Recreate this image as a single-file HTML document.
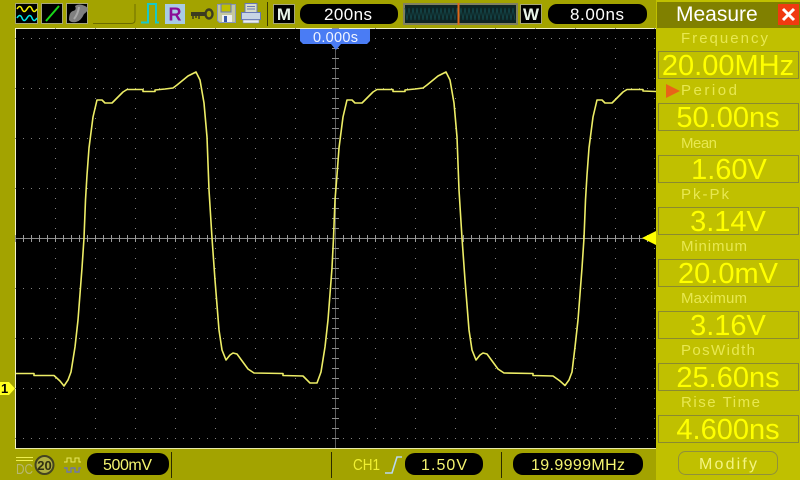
<!DOCTYPE html>
<html><head><meta charset="utf-8"><style>
html,body{margin:0;padding:0;background:#a3a300;overflow:hidden}
svg{display:block;font-family:"Liberation Sans",sans-serif}
</style></head><body>
<svg width="800" height="480" viewBox="0 0 800 480" xmlns="http://www.w3.org/2000/svg">
<rect width="800" height="480" fill="#a3a300"/>
<!-- screen -->
<rect x="15" y="28" width="641" height="421" fill="#000"/>
<path d="M15.5 449V28.5H656" fill="none" stroke="#f4f4c8"/>
<path d="M15 448.5H656" stroke="#e8e8a8"/>
<!-- grid -->
<g stroke="#808080" fill="none">
<g stroke-dasharray="1 7">
<path d="M15 38.5H655M15 88.5H655M15 138.5H655M15 188.5H655M15 288.5H655M15 338.5H655M15 388.5H655M15 438.5H655"/>
</g>
<g stroke-dasharray="1 9">
<path d="M55.5 28V448M95.5 28V448M135.5 28V448M175.5 28V448M215.5 28V448M255.5 28V448M295.5 28V448M375.5 28V448M415.5 28V448M455.5 28V448M495.5 28V448M535.5 28V448M575.5 28V448M615.5 28V448M654.5 28V448"/>
</g>
<path d="M16 238.500H656" stroke="#8c8c8c"/>
<path d="M15 238.500H656" stroke-dasharray="1 7" stroke-width="7" stroke="#9a9a9a"/>
<path d="M335.500 28V448" stroke="#5c5c5c"/>
<path d="M335.500 28V448" stroke-dasharray="1 9" stroke-width="7" stroke="#8c8c8c"/>
</g>
<!-- waveform -->
<polyline fill="none" stroke="#eded66" stroke-width="1.6" stroke-linejoin="round" points="16,373.5 34,373.5 34,375.5 54,375.5 60,381 64,386 68,380 71,372 75,347 78,320 82,268 84,238 85.5,200 87,175 89,148 93,117 97,100 102,100 105,103 112,103 123,92 127,89.5 143,89.5 143,91.5 155,91.5 155,90 165,89 173,88 177,85 188,76 196,72 200,80 204,103 207,137 209,190 212,238 215,280 219,330 222,350 226,360 230,355 233,353 237,354 248,369 254,373 283,373.5 283,375.500 303,376 310,383 317,383 321,372 325,347 328,320 332,268 333.5,238 335,200 337,175 339,148 343,117 347,100 352,100 355,103 362,103 373,92 377,89.5 393,89.5 393,91.5 405,91.5 405,90 415,89 423,88 427,85 438,76 446,72 450,80 454,103 457,137 459,190 462,238 465,280 469,330 472,350 476,360 480,355 483,353 487,354 498,369 504,373 533,373.5 533,375.5 553,376 560,381 565,385.5 569,380 572,372 575,347 578,320 582,268 584,238 585.5,200 587,175 589,148 593,117 597,100 602,100 605,103 612,103 623,92 627,89.5 643,89.5 643,91 656,91.5"/>
<!-- top-left icons -->
<rect x="15.5" y="3.5" width="22" height="20" fill="#000" stroke="#a8a878"/>
<path d="M17 9q3-5 5 0t5 0 5 0 5 0" fill="none" stroke="#f0f000" stroke-width="1.6"/>
<path d="M17 18q3-5 5 0t5 0 5 0 5 0" fill="none" stroke="#00e8e8" stroke-width="1.6"/>
<rect x="41.5" y="3.5" width="21" height="20" fill="#000" stroke="#a8a878"/>
<path d="M46 21L59 6" stroke="#18d818" stroke-width="2"/>
<rect x="66.5" y="3.5" width="21" height="20" fill="#000" stroke="#a8a878"/>
<path d="M69 20Q69 12 73 11T75 6Q79 3 85 6T84 14Q81 21 76 22T69 20Z" fill="#808080"/>
<path d="M74 19Q78 14 79 7" stroke="#a8a8a8" stroke-width="2" fill="none"/>
<path d="M93 23.5H131Q135 23.5 135 20V4" fill="none" stroke="#6c6c00"/>
<path d="M141 22.5H148V4H156V22.5H159" fill="none" stroke="#18c8c8" stroke-width="2"/>
<rect x="165" y="4" width="20" height="20" fill="#a8cbe4"/>
<text x="175" y="20.500" font-size="18" font-weight="bold" fill="#8a0a96" text-anchor="middle">R</text>
<!-- key -->
<path d="M191 14H205" stroke="#3c3c20" stroke-width="4"/>
<path d="M193 16v3M196 16v2M199 16v3" stroke="#3c3c20" stroke-width="1.5"/>
<ellipse cx="209" cy="14" rx="3.500" ry="4.500" fill="none" stroke="#3c3c20" stroke-width="2.400"/>
<!-- floppy -->
<path d="M217.500 4.500H235.500V22.500H219.500L217.500 20.500Z" fill="#c4c8a0" stroke="#8898c0"/>
<rect x="221" y="4" width="10" height="8" fill="#c0c000" stroke="#6878b8"/>
<rect x="222" y="15" width="10" height="7" fill="#eef0f0"/>
<rect x="224" y="16" width="3" height="6" fill="#3858a8"/>
<!-- printer -->
<rect x="245" y="3.500" width="12" height="9" fill="#d8dcc8" stroke="#6878b8"/>
<path d="M247 6.500H255M247 9H255" stroke="#6878b8"/>
<rect x="241.500" y="12.500" width="19" height="7" fill="#c8d4e4" stroke="#6878b8"/>
<rect x="243" y="20" width="16" height="3" fill="#e8ecf0" stroke="#8090b0" stroke-width=".6"/>
<path d="M267.500 2V26" stroke="#3c3c00"/>
<!-- M -->
<rect x="273.500" y="4.500" width="21" height="19" fill="#000" stroke="#a8a878"/>
<text x="284" y="20" font-size="17" font-weight="bold" fill="#e8f4e8" text-anchor="middle">M</text>
<rect x="300" y="4" width="98" height="20" rx="9" fill="#000"/>
<text x="324" y="20" font-size="17" fill="#fff" textLength="48" lengthAdjust="spacing">200ns</text>
<!-- wave overview -->
<rect x="404" y="4" width="113" height="20" fill="#0e2424" stroke="#808060" stroke-width="2"/>
<path d="M405 8L407 20L409 8L411 20L413 8L415 20L417 8L419 20L421 8L423 20L425 8L427 20L429 8L431 20L433 8L435 20L437 8L439 20L441 8L443 20L445 8L447 20L449 8L451 20L453 8L455 20L457 8L459 20L461 8L463 20L465 8L467 20L469 8L471 20L473 8L475 20L477 8L479 20L481 8L483 20L485 8L487 20L489 8L491 20L493 8L495 20L497 8L499 20L501 8L503 20L505 8L507 20L509 8L511 20L513 8L515 20" fill="none" stroke="#14484c" stroke-width=".8"/>
<rect x="457.500" y="3" width="2" height="22" fill="#e06818"/>
<!-- W -->
<rect x="520.500" y="4.500" width="21" height="19" fill="#000" stroke="#a8a878"/>
<text x="531" y="20" font-size="17" font-weight="bold" fill="#e8f4e8" text-anchor="middle">W</text>
<rect x="548" y="4" width="99" height="20" rx="9" fill="#000"/>
<text x="570" y="20" font-size="17" fill="#fff" textLength="54" lengthAdjust="spacing">8.00ns</text>
<!-- trigger time tag -->
<path d="M300 29H370V41L367 44H341L336 50L331 44H303L300 41Z" fill="#4a7cf4"/>
<text x="313" y="42" font-size="14.500" fill="#f0f4ff" textLength="45" lengthAdjust="spacing">0.000s</text>
<!-- markers -->
<path d="M656 231V245L642 238Z" fill="#ffff00"/>
<path d="M0 382H9L15 388.500L9 395H0Z" fill="#ffff20"/>
<text x="1" y="393" font-size="13" font-weight="bold" fill="#000">1</text>
<!-- right panel -->
<rect x="656" y="0" width="144" height="480" fill="#c0c000"/>
<rect x="657" y="2" width="143" height="26" fill="#808000"/>
<text x="676" y="21" font-size="21" fill="#fff">Measure</text>
<rect x="778" y="4" width="21" height="21" fill="#f03a10"/>
<path d="M783 9L794 20M794 9L783 20" stroke="#fff" stroke-width="3"/>
<g fill="none" stroke="#8a8a30">
<rect x="658.500" y="51.500" width="140" height="27"/>
<rect x="658.500" y="103.500" width="140" height="27"/>
<rect x="658.500" y="155.500" width="140" height="27"/>
<rect x="658.500" y="207.500" width="140" height="27"/>
<rect x="658.500" y="259.500" width="140" height="27"/>
<rect x="658.500" y="311.500" width="140" height="27"/>
<rect x="658.500" y="363.500" width="140" height="27"/>
<rect x="658.500" y="415.500" width="140" height="27"/>
</g>
<g font-size="15" fill="#e8e850">
<text x="681" y="43" textLength="87" lengthAdjust="spacing">Frequency</text>
<text x="681" y="95" textLength="56" lengthAdjust="spacing">Period</text>
<text x="681" y="148" textLength="36" lengthAdjust="spacing">Mean</text>
<text x="681" y="199" textLength="48" lengthAdjust="spacing">Pk-Pk</text>
<text x="681" y="251" textLength="66" lengthAdjust="spacing">Minimum</text>
<text x="681" y="303" textLength="66" lengthAdjust="spacing">Maximum</text>
<text x="681" y="355" textLength="74" lengthAdjust="spacing">PosWidth</text>
<text x="681" y="407" textLength="79" lengthAdjust="spacing">Rise Time</text>
</g>
<path d="M666 84L680 91L666 98Z" fill="#e86418"/>
<g font-size="29" fill="#ffff00" text-anchor="middle">
<text x="728" y="75">20.00MHz</text>
<text x="728" y="127">50.00ns</text>
<text x="729" y="179">1.60V</text>
<text x="728" y="231">3.14V</text>
<text x="728" y="283">20.0mV</text>
<text x="728" y="335">3.16V</text>
<text x="728" y="387">25.60ns</text>
<text x="728" y="439">4.600ns</text>
</g>
<rect x="678.500" y="451.500" width="99" height="23" rx="7" fill="none" stroke="#90903a"/>
<text x="699" y="469" font-size="16" fill="#f4f480" textLength="58" lengthAdjust="spacing">Modify</text>
<!-- bottom bar -->
<path d="M16 457.500H33M16 460.500H33" stroke="#eeee50"/>
<text x="16" y="474" font-size="15" fill="#b8b870" textLength="17" lengthAdjust="spacingAndGlyphs">DC</text>
<circle cx="44.500" cy="465" r="9" fill="#b0b040" stroke="#444420" stroke-width="2"/>
<text x="44.500" y="470" font-size="13" font-weight="bold" fill="#303010" text-anchor="middle">20</text>
<path d="M64 462H67V458H71V462H75V458H79V462H81" fill="none" stroke="#e8e860"/>
<path d="M64 468H67V472H71V468H75V472H79V468H81" fill="none" stroke="#7078a8" stroke-width="1.400"/>
<rect x="87" y="453" width="82" height="22" rx="10" fill="#000"/>
<text x="103" y="470" font-size="16" fill="#f4f470" textLength="49" lengthAdjust="spacing">500mV</text>
<path d="M171.500 452V478M331.500 452V478M501.500 452V478" stroke="#2c2c00"/>
<text x="353" y="470" font-size="16" fill="#f0f030" textLength="27" lengthAdjust="spacingAndGlyphs">CH1</text>
<path d="M385 473H392L397 457H402" fill="none" stroke="#b8d8f0" stroke-width="1.600"/>
<rect x="405" y="453" width="78" height="22" rx="10" fill="#000"/>
<text x="421" y="470" font-size="16" fill="#f4f470" textLength="46" lengthAdjust="spacing">1.50V</text>
<rect x="513" y="453" width="130" height="22" rx="10" fill="#000"/>
<text x="531" y="470" font-size="16" fill="#f4f470" textLength="94" lengthAdjust="spacing">19.9999MHz</text>
</svg>
</body></html>
